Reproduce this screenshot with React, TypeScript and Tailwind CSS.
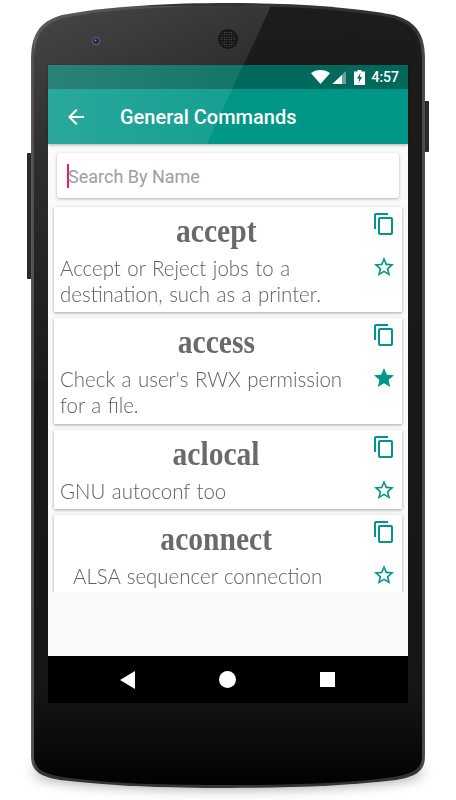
import React from "react";

const COPY = "M16 1H4c-1.1 0-2 .9-2 2v14h2V3h12V1zm3 4H8c-1.1 0-2 .9-2 2v14c0 1.1.9 2 2 2h11c1.1 0 2-.9 2-2V7c0-1.1-.9-2-2-2zm0 16H8V7h11v14z";
const STAR_O = "M22 9.24l-7.19-.62L12 2 9.19 8.63 2 9.24l5.46 4.73L5.82 21 12 17.27 18.18 21l-1.63-7.03L22 9.24zM12 15.4l-3.76 2.27 1-4.28-3.32-2.88 4.38-.38L12 6.1l1.71 4.04 4.38.38-3.32 2.88 1 4.28L12 15.4z";
const STAR_F = "M12 17.27L18.18 21l-1.64-7.03L22 9.24l-7.19-.61L12 2 9.19 8.63 2 9.24l5.46 4.73L5.82 21z";

function Icon({ d }: { d: string }) {
  return (
    <svg width="24" height="24" viewBox="0 0 24 24" className="fill-[#009688] block">
      <path d={d} />
    </svg>
  );
}

function PhoneShell() {
  const body = "M31 60 C31 36 38 22 62 15 C110 6 170 3 228 3 C286 3 346 6 394 15 C418 22 425 36 425 60 L425 756 C425 770 418 776 396 780 C346 786 286 788 228 788 C170 788 110 786 60 780 C38 776 31 770 31 756 Z";
  return (
    <svg width="456" height="800" viewBox="0 0 456 800" className="absolute inset-0">
      <defs>
        <filter id="blur" x="-20%" y="-200%" width="140%" height="500%">
          <feGaussianBlur stdDeviation="7" />
        </filter>
        <linearGradient id="edge" x1="0" y1="0" x2="1" y2="0">
          <stop offset="0" stopColor="#5a5a5a" />
          <stop offset="0.02" stopColor="#333" />
          <stop offset="0.98" stopColor="#333" />
          <stop offset="1" stopColor="#505050" />
        </linearGradient>
        <linearGradient id="face" x1="0" y1="0" x2="0" y2="1">
          <stop offset="0" stopColor="#1c1c1c" />
          <stop offset="0.87" stopColor="#161616" />
          <stop offset="0.94" stopColor="#0c0c0c" />
          <stop offset="1" stopColor="#020202" />
        </linearGradient>
        <linearGradient id="sheen" x1="0" y1="0" x2="0.3" y2="1">
          <stop offset="0" stopColor="#ffffff" stopOpacity="0.19" />
          <stop offset="0.4" stopColor="#ffffff" stopOpacity="0.08" />
          <stop offset="1" stopColor="#ffffff" stopOpacity="0" />
        </linearGradient>
        <pattern id="mesh" width="2.4" height="2.4" patternUnits="userSpaceOnUse">
          <circle cx="1.2" cy="1.2" r="0.65" fill="#555" />
        </pattern>
        <clipPath id="bodyClip">
          <path d={body} />
        </clipPath>
      </defs>
      <ellipse cx="228" cy="772" rx="195" ry="16" fill="#000" opacity="0.4" filter="url(#blur)" />
      <rect x="27" y="153" width="6" height="126" rx="1" fill="#2a2a2a" />
      <rect x="423" y="101" width="6" height="51" rx="1" fill="#2a2a2a" />
      <path d={body} fill="url(#edge)" />
      <path d="M34 60 C34 38 41 25 63 18 C110 9 170 6 228 6 C286 6 346 9 393 18 C415 25 422 38 422 60 L422 756 C422 768 415 773 394 777 C346 784 286 785 228 785 C170 785 110 784 62 777 C41 773 34 768 34 756 Z" fill="url(#face)" />
      <g clipPath="url(#bodyClip)">
        <polygon points="34,6 271,6 97,380 34,380" fill="url(#sheen)" />
      </g>
      <circle cx="96" cy="41" r="4.5" fill="#555" />
      <circle cx="96" cy="41" r="2.8" fill="#1d2050" />
      <circle cx="95.5" cy="40.5" r="0.9" fill="#8a90c0" />
      <circle cx="228" cy="39" r="10" fill="#151515" />
      <circle cx="228" cy="39" r="8.5" fill="url(#mesh)" />
      <circle cx="353" cy="39" r="3.5" fill="#1b1b1b" />
      <circle cx="366" cy="39" r="2" fill="#1b1b1b" />
    </svg>
  );
}

function Card({ title, lines, starred, h, indent }: { title: string; lines: string[]; starred?: boolean; h: string; indent?: boolean }) {
  return (
    <div className={`flex shrink-0 bg-white mx-[6px] mb-[6px] shadow-[0_1px_3px_rgba(0,0,0,0.35)] ${h}`}>
      <div className="w-[324px] shrink-0">
        <div className="h-[48px] flex items-center justify-center pb-[1px] text-[34px] font-bold text-[#6a6a6a] [font-family:'Liberation_Serif',serif]">
          <span className="inline-block scale-x-[0.87]">{title}</span>
        </div>
        <div className={`text-[22px] leading-[26px] font-light text-[#5f5f5f] [font-family:Lato,sans-serif] whitespace-nowrap [word-spacing:1px] ${indent ? "pl-[19px]" : "pl-[6px]"}`}>
          <div className="origin-left scale-x-[0.93]">
            {lines.map((l) => (
              <div key={l}>{l}</div>
            ))}
          </div>
        </div>
      </div>
      <div className="flex flex-col ml-[-6px]">
        <div className="mt-[5px]"><Icon d={COPY} /></div>
        <div className="mt-[19px]"><Icon d={starred ? STAR_F : STAR_O} /></div>
      </div>
    </div>
  );
}

export default function App() {
  return (
    <div className="relative w-[456px] h-[800px] bg-white overflow-hidden">
      <PhoneShell />
      <div className="relative ml-[48px] w-[360px] pt-[65px]">
        <div className="relative shadow-[0_1px_3px_rgba(0,0,0,0.3)] z-10">
          <div className="h-[24px] bg-[#00695c] flex items-center justify-end pr-[9px]">
            <svg width="19" height="14" viewBox="0 0 19 14" className="fill-white"><path d="M9.5 14 0 3.2C2.6 1.2 5.9 0 9.5 0s6.9 1.2 9.5 3.2z" /></svg>
            <svg width="15" height="14" viewBox="0 0 15 14" className="ml-[2px]">
              <path d="M14 1v13H0z" fill="#fff" fillOpacity="0.4" />
              <path d="M10 5v9H0.5z" fill="#fff" />
            </svg>
            <svg width="11" height="15" viewBox="0 0 11 15" className="ml-[7px]">
              <path d="M3.5 0h4v1.5H11V15H0V1.5h3.5z" fill="#fff" />
              <path d="M6.5 3 3 8.5h2.2L4.5 13 8 7H5.7z" fill="#00695c" />
            </svg>
            <span className="ml-[6px] text-[14px] font-medium text-white [font-family:Roboto,sans-serif]">4:57</span>
          </div>
          <div className="h-[55px] bg-[#009688] flex items-center pl-[16px]">
            <svg width="24" height="24" viewBox="0 0 24 24" className="fill-white"><path d="M20 11H7.83l5.59-5.59L12 4l-8 8 8 8 1.41-1.41L7.83 13H20v-2z" /></svg>
            <span className="ml-[32px] text-[20px] font-medium text-white [font-family:Roboto,sans-serif]">General Commands</span>
          </div>
          <svg width="360" height="79" viewBox="0 0 360 79" className="absolute inset-0 pointer-events-none">
            <defs>
              <linearGradient id="hs" x1="0" y1="0" x2="1" y2="0">
                <stop offset="0" stopColor="#fff" stopOpacity="0.17" />
                <stop offset="1" stopColor="#fff" stopOpacity="0.08" />
              </linearGradient>
            </defs>
            <polygon points="0,0 195,0 159,79 0,79" fill="url(#hs)" />
          </svg>
        </div>
        <div className="h-[512px] bg-[#fafafa]">
          <div className="h-[448px] overflow-hidden flex flex-col">
            <div className="shrink-0 mx-[9px] mt-[9px] mb-[9px] h-[45px] bg-white rounded-[3px] shadow-[0_1px_3px_rgba(0,0,0,0.3)] flex items-center pl-[10px]">
              <span className="w-[2px] h-[24px] bg-[#e91e63]" />
              <span className="ml-[-1px] mt-[2px] text-[18px] text-[#9e9e9e] [font-family:Roboto,sans-serif]">Search By Name</span>
            </div>
            <Card title="accept" lines={["Accept or Reject jobs to a", "destination, such as a printer."]} h="h-[105px]" />
            <Card title="access" lines={["Check a user's RWX permission", "for a file."]} starred h="h-[106px]" />
            <Card title="aclocal" lines={["GNU autoconf too"]} h="h-[79px]" />
            <Card title="aconnect" lines={["ALSA sequencer connection"]} h="h-[79px]" indent />
          </div>
        </div>
        <div className="h-[47px] bg-black flex items-center justify-center gap-[84px] pr-[1px]">
          <svg width="15" height="18" viewBox="0 0 15 18" className="fill-white"><path d="M15 0v18L0 9z" /></svg>
          <div className="w-[17px] h-[17px] rounded-full bg-white" />
          <div className="w-[15px] h-[15px] bg-white" />
        </div>
      </div>
    </div>
  );
}
